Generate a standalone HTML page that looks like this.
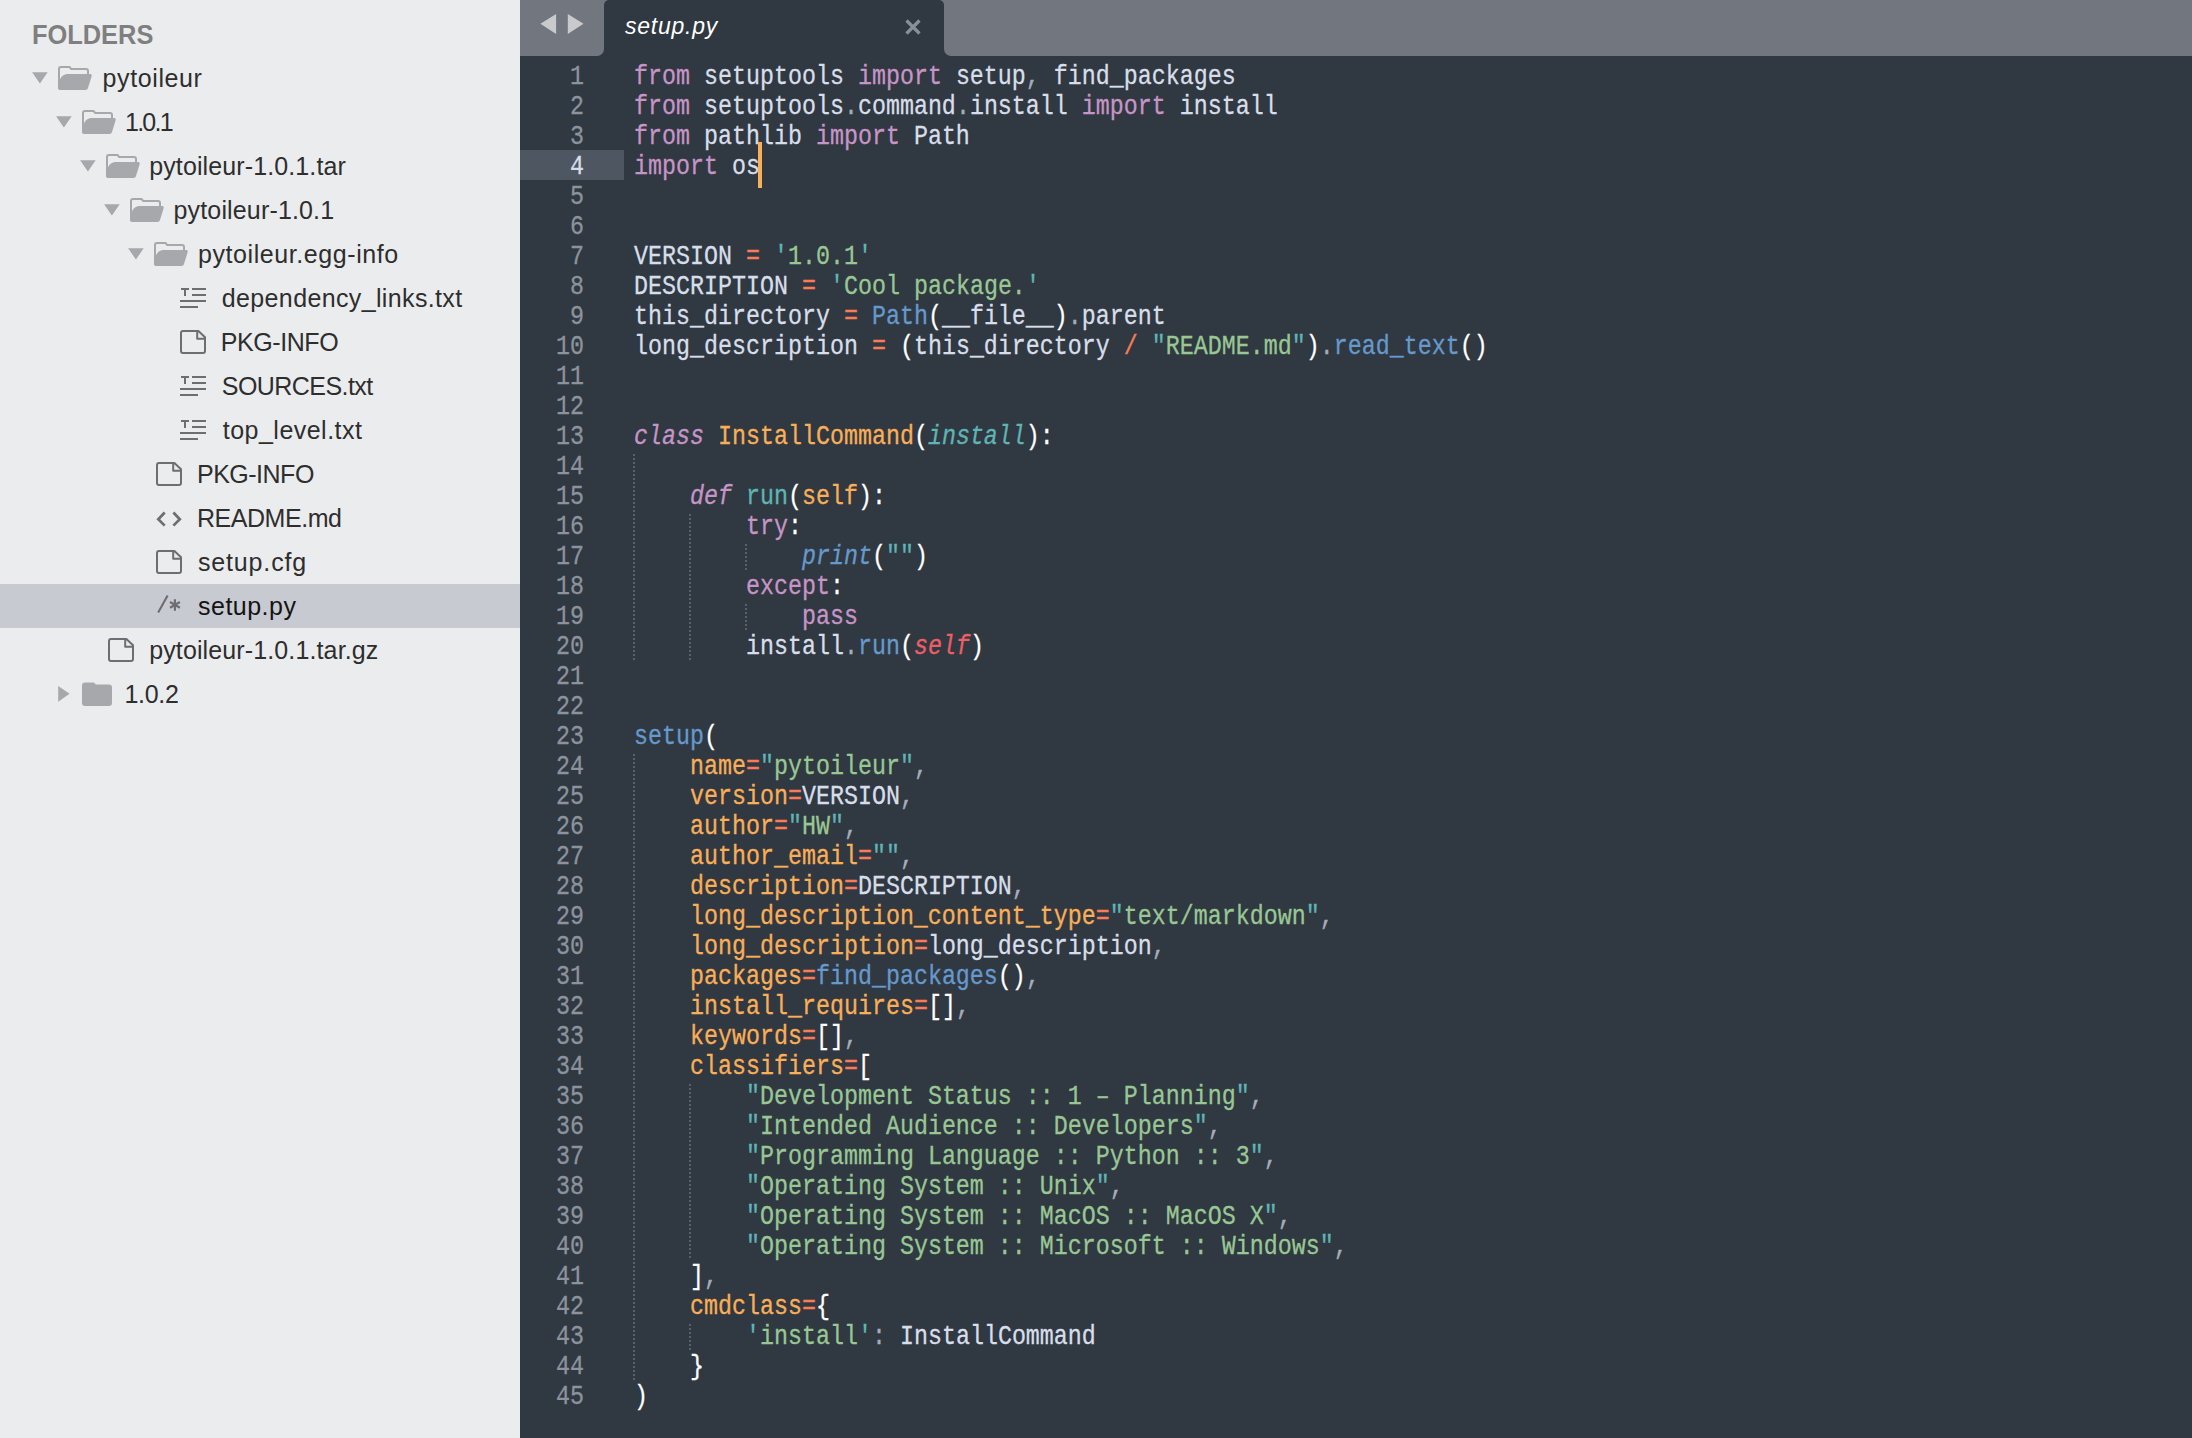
<!DOCTYPE html>
<html><head><meta charset="utf-8">
<style>
html,body{margin:0;padding:0;width:2192px;height:1438px;overflow:hidden;background:#303841;}
#side{position:absolute;left:0;top:0;width:520px;height:1438px;background:#ebecee;font-family:"Liberation Sans",sans-serif;}
#fold{position:absolute;left:32px;top:13px;font-weight:bold;font-size:27.5px;line-height:44px;color:#7f7f7f;white-space:pre;transform-origin:0 0;transform:scaleX(0.9235);}
.it{position:absolute;height:44px;line-height:44px;font-size:25px;color:#2e2e2e;white-space:pre;}
.it.sel{color:#141414;}
.selbg{position:absolute;left:0;width:520px;height:44px;background:#c8cad2;}
.ic{position:absolute;overflow:visible;}
#tabbar{position:absolute;left:520px;top:0;width:1672px;height:56px;background:#303841;}
#tbl{position:absolute;left:0;top:0;width:84px;height:56px;background:#72767f;border-radius:0 0 7px 0;}
#tbr{position:absolute;left:424px;top:0;width:1248px;height:56px;background:#72767f;border-radius:0 0 0 7px;}
#tbtop{position:absolute;left:0;top:0;width:1672px;height:12px;background:#72767f;}
#tab{position:absolute;left:84px;top:0;width:340px;height:56px;background:#303841;border-radius:5px 5px 0 0;}
#tabt{position:absolute;left:105px;top:9px;font-family:"Liberation Sans",sans-serif;font-style:italic;font-size:23px;letter-spacing:0.75px;line-height:34px;color:#ffffff;white-space:pre;}
.l,.n{position:absolute;height:30px;line-height:30px;-webkit-text-stroke:0.3px currentColor;font-family:"Liberation Mono",monospace;font-size:27.2px;white-space:pre;color:#d8dee9;}
.l{left:634px;transform-origin:0 0;transform:scaleX(0.85770);}
.n{left:384px;width:200px;text-align:right;color:#8c939d;transform-origin:100% 0;transform:scaleX(0.85770);}
.n.cur{color:#d8dee9;}
#gut{position:absolute;left:520px;top:150px;width:104px;height:30px;background:#4d5661;}
#caret{position:absolute;left:758px;top:142px;width:4px;height:46px;background:#f9ae58;}
.g{position:absolute;width:2px;background:repeating-linear-gradient(to bottom,#59606b 0,#59606b 2px,transparent 2px,transparent 4px);}
i{font-style:normal;}
.k{color:#c695c6;} .ki{color:#c695c6;font-style:italic;}
.s{color:#99c794;} .q{color:#5fb4b4;}
.o{color:#f97b58;} .p{color:#a6acb9;}
.b{color:#6699cc;} .bi{color:#6699cc;font-style:italic;}
.c{color:#5fb4b4;} .ci{color:#5fb4b4;font-style:italic;}
.y{color:#f9ae58;} .ri{color:#ec5f66;font-style:italic;} .w{color:#ffffff;}
</style></head><body>
<div id="side">
<div id="fold">FOLDERS</div>
<svg class="ic" style="left:32px;top:72px" width="16" height="12" viewBox="0 0 16 12"><path d="M0.1 0.2 L15.7 0.2 L7.9 11.6 Z" fill="#a7a8ab"/></svg><svg class="ic" style="left:58px;top:66px" width="35" height="25" viewBox="0 0 35 25"><path d="M1 23 L1 3 Q1 1 3 1 L11.5 1 L13.2 3 L28 3 Q30 3 30 5 L30 8" fill="none" stroke="#a7a8ab" stroke-width="2"/><path d="M2 24 Q0 24 0 22 L0 18 Q3 8 9 8 L32.5 8 Q34 8 33.7 10 L30 22 Q29.4 24 27.5 24 Z" fill="#a7a8ab"/></svg><div class="it" style="left:102.6px;top:56px;letter-spacing:0.600px">pytoileur</div><svg class="ic" style="left:56px;top:116px" width="16" height="12" viewBox="0 0 16 12"><path d="M0.1 0.2 L15.7 0.2 L7.9 11.6 Z" fill="#a7a8ab"/></svg><svg class="ic" style="left:82px;top:110px" width="35" height="25" viewBox="0 0 35 25"><path d="M1 23 L1 3 Q1 1 3 1 L11.5 1 L13.2 3 L28 3 Q30 3 30 5 L30 8" fill="none" stroke="#a7a8ab" stroke-width="2"/><path d="M2 24 Q0 24 0 22 L0 18 Q3 8 9 8 L32.5 8 Q34 8 33.7 10 L30 22 Q29.4 24 27.5 24 Z" fill="#a7a8ab"/></svg><div class="it" style="left:125.0px;top:100px;letter-spacing:-1.750px">1.0.1</div><svg class="ic" style="left:80px;top:160px" width="16" height="12" viewBox="0 0 16 12"><path d="M0.1 0.2 L15.7 0.2 L7.9 11.6 Z" fill="#a7a8ab"/></svg><svg class="ic" style="left:106px;top:154px" width="35" height="25" viewBox="0 0 35 25"><path d="M1 23 L1 3 Q1 1 3 1 L11.5 1 L13.2 3 L28 3 Q30 3 30 5 L30 8" fill="none" stroke="#a7a8ab" stroke-width="2"/><path d="M2 24 Q0 24 0 22 L0 18 Q3 8 9 8 L32.5 8 Q34 8 33.7 10 L30 22 Q29.4 24 27.5 24 Z" fill="#a7a8ab"/></svg><div class="it" style="left:149.2px;top:144px;letter-spacing:0.117px">pytoileur-1.0.1.tar</div><svg class="ic" style="left:104px;top:204px" width="16" height="12" viewBox="0 0 16 12"><path d="M0.1 0.2 L15.7 0.2 L7.9 11.6 Z" fill="#a7a8ab"/></svg><svg class="ic" style="left:130px;top:198px" width="35" height="25" viewBox="0 0 35 25"><path d="M1 23 L1 3 Q1 1 3 1 L11.5 1 L13.2 3 L28 3 Q30 3 30 5 L30 8" fill="none" stroke="#a7a8ab" stroke-width="2"/><path d="M2 24 Q0 24 0 22 L0 18 Q3 8 9 8 L32.5 8 Q34 8 33.7 10 L30 22 Q29.4 24 27.5 24 Z" fill="#a7a8ab"/></svg><div class="it" style="left:173.5px;top:188px;letter-spacing:0.157px">pytoileur-1.0.1</div><svg class="ic" style="left:128px;top:248px" width="16" height="12" viewBox="0 0 16 12"><path d="M0.1 0.2 L15.7 0.2 L7.9 11.6 Z" fill="#a7a8ab"/></svg><svg class="ic" style="left:154px;top:242px" width="35" height="25" viewBox="0 0 35 25"><path d="M1 23 L1 3 Q1 1 3 1 L11.5 1 L13.2 3 L28 3 Q30 3 30 5 L30 8" fill="none" stroke="#a7a8ab" stroke-width="2"/><path d="M2 24 Q0 24 0 22 L0 18 Q3 8 9 8 L32.5 8 Q34 8 33.7 10 L30 22 Q29.4 24 27.5 24 Z" fill="#a7a8ab"/></svg><div class="it" style="left:198.0px;top:232px;letter-spacing:0.576px">pytoileur.egg-info</div><svg class="ic" style="left:180px;top:288px" width="28" height="22" viewBox="0 0 28 22"><g fill="#6d6e71"><rect x="1" y="0" width="8" height="2"/><rect x="4" y="0" width="2" height="8"/><rect x="12" y="0" width="14" height="2"/><rect x="12" y="6" width="14" height="2"/><rect x="0" y="12" width="26" height="2"/><rect x="0" y="18" width="18" height="2"/></g></svg><div class="it" style="left:221.8px;top:276px;letter-spacing:0.363px">dependency_links.txt</div><svg class="ic" style="left:180px;top:329px" width="28" height="26" viewBox="0 0 28 26"><path d="M3 2 L18.4 2 L25 8.3 L25 22 Q25 24 23 24 L3 24 Q1 24 1 22 L1 4 Q1 2 3 2 Z M17.2 2 L17.2 9.8 L25 9.8" fill="none" stroke="#6d6e71" stroke-width="2" stroke-linejoin="round"/></svg><div class="it" style="left:220.8px;top:320px;letter-spacing:-0.429px">PKG-INFO</div><svg class="ic" style="left:180px;top:376px" width="28" height="22" viewBox="0 0 28 22"><g fill="#6d6e71"><rect x="1" y="0" width="8" height="2"/><rect x="4" y="0" width="2" height="8"/><rect x="12" y="0" width="14" height="2"/><rect x="12" y="6" width="14" height="2"/><rect x="0" y="12" width="26" height="2"/><rect x="0" y="18" width="18" height="2"/></g></svg><div class="it" style="left:221.8px;top:364px;letter-spacing:-0.550px">SOURCES.txt</div><svg class="ic" style="left:180px;top:420px" width="28" height="22" viewBox="0 0 28 22"><g fill="#6d6e71"><rect x="1" y="0" width="8" height="2"/><rect x="4" y="0" width="2" height="8"/><rect x="12" y="0" width="14" height="2"/><rect x="12" y="6" width="14" height="2"/><rect x="0" y="12" width="26" height="2"/><rect x="0" y="18" width="18" height="2"/></g></svg><div class="it" style="left:222.8px;top:408px;letter-spacing:0.475px">top_level.txt</div><svg class="ic" style="left:156px;top:461px" width="28" height="26" viewBox="0 0 28 26"><path d="M3 2 L18.4 2 L25 8.3 L25 22 Q25 24 23 24 L3 24 Q1 24 1 22 L1 4 Q1 2 3 2 Z M17.2 2 L17.2 9.8 L25 9.8" fill="none" stroke="#6d6e71" stroke-width="2" stroke-linejoin="round"/></svg><div class="it" style="left:197.0px;top:452px;letter-spacing:-0.500px">PKG-INFO</div><svg class="ic" style="left:150px;top:496px" width="40" height="44" viewBox="0 0 40 44"><path d="M14.7 16.5 L8.3 23.2 L14.7 29.6 M23.4 16.5 L29.8 23.2 L23.4 29.6" fill="none" stroke="#6d6e71" stroke-width="2.7"/></svg><div class="it" style="left:197.0px;top:496px;letter-spacing:-0.462px">README.md</div><svg class="ic" style="left:156px;top:549px" width="28" height="26" viewBox="0 0 28 26"><path d="M3 2 L18.4 2 L25 8.3 L25 22 Q25 24 23 24 L3 24 Q1 24 1 22 L1 4 Q1 2 3 2 Z M17.2 2 L17.2 9.8 L25 9.8" fill="none" stroke="#6d6e71" stroke-width="2" stroke-linejoin="round"/></svg><div class="it" style="left:198.0px;top:540px;letter-spacing:0.838px">setup.cfg</div><div class="selbg" style="top:584px"></div><svg class="ic" style="left:150px;top:584px" width="40" height="44" viewBox="0 0 40 44"><path d="M8.2 28.4 L17.6 11.6" fill="none" stroke="#6d6e71" stroke-width="2.1"/><path d="M24.9 15.2 L24.9 26.8 M20 18 L29.9 23.8 M20 23.8 L29.9 18" fill="none" stroke="#6d6e71" stroke-width="2.2"/></svg><div class="it sel" style="left:198.0px;top:584px;letter-spacing:0.486px">setup.py</div><svg class="ic" style="left:108px;top:637px" width="28" height="26" viewBox="0 0 28 26"><path d="M3 2 L18.4 2 L25 8.3 L25 22 Q25 24 23 24 L3 24 Q1 24 1 22 L1 4 Q1 2 3 2 Z M17.2 2 L17.2 9.8 L25 9.8" fill="none" stroke="#6d6e71" stroke-width="2" stroke-linejoin="round"/></svg><div class="it" style="left:149.2px;top:628px;letter-spacing:0.124px">pytoileur-1.0.1.tar.gz</div><svg class="ic" style="left:58px;top:686px" width="13" height="16" viewBox="0 0 13 16"><path d="M0.2 0.1 L11.6 7.7 L0.2 15.8 Z" fill="#a7a8ab"/></svg><svg class="ic" style="left:82px;top:682px" width="31" height="25" viewBox="0 0 31 25"><path d="M0 3.5 Q0 0.5 3 0.5 L12 0.5 L13.8 2.5 L27 2.5 Q30 2.5 30 5.5 L30 20.5 Q30 24 27 24 L3 24 Q0 24 0 20.5 Z" fill="#a7a8ab"/></svg><div class="it" style="left:124.4px;top:672px;letter-spacing:-0.275px">1.0.2</div>
</div>
<div id="tabbar">
<div id="tbl"></div>
<div id="tbr"></div>
<div id="tbtop"></div>
<div id="tab"></div>
<svg style="position:absolute;left:20px;top:13px" width="44" height="22" viewBox="0 0 44 22"><path d="M0.4 10.7 L16.1 0.9 L16.1 20.9 Z M27.8 0.9 L43.5 10.7 L27.8 20.9 Z" fill="#c9cacd"/></svg>
<div id="tabt">setup.py</div>
<svg style="position:absolute;left:385px;top:19px" width="16" height="16" viewBox="0 0 16 16"><path d="M1.5 1.5 L14.5 14.5 M14.5 1.5 L1.5 14.5" stroke="#8a8f95" stroke-width="3.2"/></svg>
</div>
<div id="gut"></div>
<div class="g" style="left:633px;top:454px;height:206px"></div>
<div class="g" style="left:633px;top:754px;height:626px"></div>
<div class="g" style="left:689px;top:514px;height:146px"></div>
<div class="g" style="left:689px;top:1084px;height:176px"></div>
<div class="g" style="left:689px;top:1324px;height:26px"></div>
<div class="g" style="left:745px;top:544px;height:26px"></div>
<div class="g" style="left:745px;top:604px;height:26px"></div>
<div class="n" style="top:62px">1</div>
<div class="n" style="top:92px">2</div>
<div class="n" style="top:122px">3</div>
<div class="n cur" style="top:152px">4</div>
<div class="n" style="top:182px">5</div>
<div class="n" style="top:212px">6</div>
<div class="n" style="top:242px">7</div>
<div class="n" style="top:272px">8</div>
<div class="n" style="top:302px">9</div>
<div class="n" style="top:332px">10</div>
<div class="n" style="top:362px">11</div>
<div class="n" style="top:392px">12</div>
<div class="n" style="top:422px">13</div>
<div class="n" style="top:452px">14</div>
<div class="n" style="top:482px">15</div>
<div class="n" style="top:512px">16</div>
<div class="n" style="top:542px">17</div>
<div class="n" style="top:572px">18</div>
<div class="n" style="top:602px">19</div>
<div class="n" style="top:632px">20</div>
<div class="n" style="top:662px">21</div>
<div class="n" style="top:692px">22</div>
<div class="n" style="top:722px">23</div>
<div class="n" style="top:752px">24</div>
<div class="n" style="top:782px">25</div>
<div class="n" style="top:812px">26</div>
<div class="n" style="top:842px">27</div>
<div class="n" style="top:872px">28</div>
<div class="n" style="top:902px">29</div>
<div class="n" style="top:932px">30</div>
<div class="n" style="top:962px">31</div>
<div class="n" style="top:992px">32</div>
<div class="n" style="top:1022px">33</div>
<div class="n" style="top:1052px">34</div>
<div class="n" style="top:1082px">35</div>
<div class="n" style="top:1112px">36</div>
<div class="n" style="top:1142px">37</div>
<div class="n" style="top:1172px">38</div>
<div class="n" style="top:1202px">39</div>
<div class="n" style="top:1232px">40</div>
<div class="n" style="top:1262px">41</div>
<div class="n" style="top:1292px">42</div>
<div class="n" style="top:1322px">43</div>
<div class="n" style="top:1352px">44</div>
<div class="n" style="top:1382px">45</div>
<div class="l" style="top:62px"><i class="k">from</i> setuptools <i class="k">import</i> setup<i class="p">,</i> find_packages</div>
<div class="l" style="top:92px"><i class="k">from</i> setuptools<i class="p">.</i>command<i class="p">.</i>install <i class="k">import</i> install</div>
<div class="l" style="top:122px"><i class="k">from</i> pathlib <i class="k">import</i> Path</div>
<div class="l" style="top:152px"><i class="k">import</i> os</div>
<div class="l" style="top:182px"></div>
<div class="l" style="top:212px"></div>
<div class="l" style="top:242px">VERSION <i class="o">=</i> <i class="q">&#x27;</i><i class="s">1.0.1</i><i class="q">&#x27;</i></div>
<div class="l" style="top:272px">DESCRIPTION <i class="o">=</i> <i class="q">&#x27;</i><i class="s">Cool package.</i><i class="q">&#x27;</i></div>
<div class="l" style="top:302px">this_directory <i class="o">=</i> <i class="b">Path</i><i class="w">(</i>__file__<i class="w">)</i><i class="p">.</i>parent</div>
<div class="l" style="top:332px">long_description <i class="o">=</i> <i class="w">(</i>this_directory <i class="o">/</i> <i class="q">&quot;</i><i class="s">README.md</i><i class="q">&quot;</i><i class="w">)</i><i class="p">.</i><i class="b">read_text</i><i class="w">(</i><i class="w">)</i></div>
<div class="l" style="top:362px"></div>
<div class="l" style="top:392px"></div>
<div class="l" style="top:422px"><i class="ki">class</i> <i class="y">InstallCommand</i><i class="w">(</i><i class="ci">install</i><i class="w">)</i><i class="w">:</i></div>
<div class="l" style="top:452px"></div>
<div class="l" style="top:482px">    <i class="ki">def</i> <i class="c">run</i><i class="w">(</i><i class="y">self</i><i class="w">)</i><i class="w">:</i></div>
<div class="l" style="top:512px">        <i class="k">try</i><i class="w">:</i></div>
<div class="l" style="top:542px">            <i class="bi">print</i><i class="w">(</i><i class="q">&quot;&quot;</i><i class="w">)</i></div>
<div class="l" style="top:572px">        <i class="k">except</i><i class="w">:</i></div>
<div class="l" style="top:602px">            <i class="k">pass</i></div>
<div class="l" style="top:632px">        install<i class="p">.</i><i class="b">run</i><i class="w">(</i><i class="ri">self</i><i class="w">)</i></div>
<div class="l" style="top:662px"></div>
<div class="l" style="top:692px"></div>
<div class="l" style="top:722px"><i class="b">setup</i><i class="w">(</i></div>
<div class="l" style="top:752px">    <i class="y">name</i><i class="o">=</i><i class="q">&quot;</i><i class="s">pytoileur</i><i class="q">&quot;</i><i class="p">,</i></div>
<div class="l" style="top:782px">    <i class="y">version</i><i class="o">=</i>VERSION<i class="p">,</i></div>
<div class="l" style="top:812px">    <i class="y">author</i><i class="o">=</i><i class="q">&quot;</i><i class="s">HW</i><i class="q">&quot;</i><i class="p">,</i></div>
<div class="l" style="top:842px">    <i class="y">author_email</i><i class="o">=</i><i class="q">&quot;&quot;</i><i class="p">,</i></div>
<div class="l" style="top:872px">    <i class="y">description</i><i class="o">=</i>DESCRIPTION<i class="p">,</i></div>
<div class="l" style="top:902px">    <i class="y">long_description_content_type</i><i class="o">=</i><i class="q">&quot;</i><i class="s">text/markdown</i><i class="q">&quot;</i><i class="p">,</i></div>
<div class="l" style="top:932px">    <i class="y">long_description</i><i class="o">=</i>long_description<i class="p">,</i></div>
<div class="l" style="top:962px">    <i class="y">packages</i><i class="o">=</i><i class="b">find_packages</i><i class="w">(</i><i class="w">)</i><i class="p">,</i></div>
<div class="l" style="top:992px">    <i class="y">install_requires</i><i class="o">=</i><i class="w">[</i><i class="w">]</i><i class="p">,</i></div>
<div class="l" style="top:1022px">    <i class="y">keywords</i><i class="o">=</i><i class="w">[</i><i class="w">]</i><i class="p">,</i></div>
<div class="l" style="top:1052px">    <i class="y">classifiers</i><i class="o">=</i><i class="w">[</i></div>
<div class="l" style="top:1082px">        <i class="q">&quot;</i><i class="s">Development Status :: 1 – Planning</i><i class="q">&quot;</i><i class="p">,</i></div>
<div class="l" style="top:1112px">        <i class="q">&quot;</i><i class="s">Intended Audience :: Developers</i><i class="q">&quot;</i><i class="p">,</i></div>
<div class="l" style="top:1142px">        <i class="q">&quot;</i><i class="s">Programming Language :: Python :: 3</i><i class="q">&quot;</i><i class="p">,</i></div>
<div class="l" style="top:1172px">        <i class="q">&quot;</i><i class="s">Operating System :: Unix</i><i class="q">&quot;</i><i class="p">,</i></div>
<div class="l" style="top:1202px">        <i class="q">&quot;</i><i class="s">Operating System :: MacOS :: MacOS X</i><i class="q">&quot;</i><i class="p">,</i></div>
<div class="l" style="top:1232px">        <i class="q">&quot;</i><i class="s">Operating System :: Microsoft :: Windows</i><i class="q">&quot;</i><i class="p">,</i></div>
<div class="l" style="top:1262px">    <i class="w">]</i><i class="p">,</i></div>
<div class="l" style="top:1292px">    <i class="y">cmdclass</i><i class="o">=</i><i class="w">{</i></div>
<div class="l" style="top:1322px">        <i class="q">&#x27;</i><i class="s">install</i><i class="q">&#x27;</i><i class="p">:</i> InstallCommand</div>
<div class="l" style="top:1352px">    <i class="w">}</i></div>
<div class="l" style="top:1382px"><i class="w">)</i></div>
<div id="caret"></div>
</body></html>
